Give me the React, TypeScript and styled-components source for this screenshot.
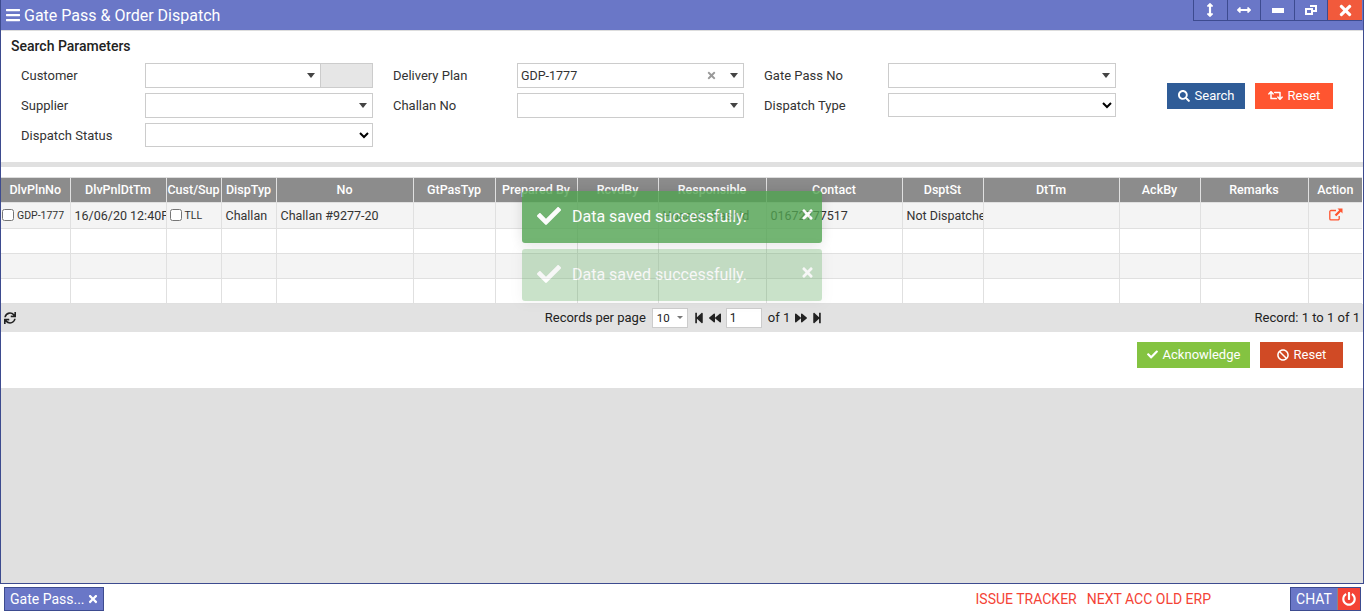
import React from 'react';
import styled, { createGlobalStyle } from 'styled-components';
import {
  FaArrowsAltH,
  FaArrowsAltV,
  FaBackward,
  FaBan,
  FaBars,
  FaCheck,
  FaForward,
  FaPowerOff,
  FaRetweet,
  FaSearch,
  FaStepBackward,
  FaStepForward,
  FaSync,
  FaTimes,
} from 'react-icons/fa';

const GlobalStyle = createGlobalStyle`
  html, body {
    margin: 0;
    padding: 0;
    background: #fff;
    overflow: hidden;
  }
  body {
    font-family: Roboto, "Liberation Sans", sans-serif;
    font-size: 13px;
    color: #333;
  }
  * {
    box-sizing: border-box;
  }
`;

const Page = styled.div`
  width: 1364px;
  height: 613px;
  display: flex;
  flex-direction: column;
`;

const Window = styled.div`
  height: 584px;
  flex: none;
  border: 1px solid #3d4b8f;
  border-top: 0;
  display: flex;
  flex-direction: column;
  background: #e0e0e0;
  position: relative;
`;

const TitleBar = styled.div`
  height: 30px;
  flex: none;
  background: #6a77c7;
  color: #fff;
  display: flex;
  justify-content: space-between;
  align-items: flex-start;
  padding-left: 4px;
`;

const Title = styled.div`
  display: flex;
  align-items: center;
  gap: 3px;
  height: 30px;
  font-size: 16px;
`;

const WindowControls = styled.div`
  display: flex;
  height: 21px;
  border-left: 1px solid #3d4b8f;
  border-bottom: 1px solid #3d4b8f;
  margin-right: 1px;
`;

const WindowControl = styled.div<{ $close?: boolean }>`
  width: 33.6px;
  display: flex;
  align-items: center;
  justify-content: center;
  border-right: 1px solid #3d4b8f;
  background: ${(p) => (p.$close ? '#f15a3c' : 'transparent')};
  font-size: ${(p) => (p.$close ? '17px' : '14px')};
  &:last-child {
    border-right: 0;
  }
`;

const MinimizeBar = styled.span`
  width: 12px;
  height: 5px;
  background: #fff;
`;

const SearchPanel = styled.div`
  height: 132px;
  flex: none;
  background: #fff;
  border-top: 1px solid #ddd;
  padding: 8px 0 0 10px;
`;

const PanelTitle = styled.div`
  font-weight: 500;
  font-size: 14px;
  line-height: 15px;
  color: #222;
`;

const FormGrid = styled.div`
  margin-top: 9px;
  padding-left: 10px;
  display: grid;
  grid-template-columns: 124px 228px 144px 227px 144px 228px auto;
  grid-template-rows: 25px 25px 24px;
  row-gap: 5px;
  align-items: center;
`;

const FieldLabel = styled.label<{ $offset?: boolean }>`
  color: #333;
  font-size: 13px;
  padding-left: ${(p) => (p.$offset ? '20px' : '0')};
`;

const FieldCell = styled.div`
  display: flex;
  height: 100%;
  min-width: 0;
`;

const Combo = styled.div`
  flex: 1;
  height: 25px;
  border: 1px solid #ccc;
  background: #fff;
  display: flex;
  align-items: center;
  padding: 0 5px 0 3px;
  font-size: 12.5px;
  color: #333;
`;

const ComboValue = styled.span`
  flex: 1;
`;

const ClearIcon = styled(FaTimes)`
  font-size: 11px;
  color: #999;
  margin-right: 13px;
`;

const Caret = styled.span`
  width: 0;
  height: 0;
  border-left: 4.5px solid transparent;
  border-right: 4.5px solid transparent;
  border-top: 5px solid #444;
`;

const ComboAddon = styled.div`
  width: 52px;
  height: 25px;
  flex: none;
  background: #e6e6e6;
  border: 1px solid #ccc;
  border-left: 0;
`;

const NativeSelect = styled.select`
  width: 100%;
  height: 24px;
  border: 1px solid #ccc;
  border-radius: 0;
  background: #fff;
  font-family: inherit;
  font-size: 12.5px;
`;

const SearchActions = styled.div`
  grid-column: 7;
  grid-row: 1 / span 3;
  align-self: start;
  display: flex;
  gap: 10px;
  margin: 20px 0 0 51px;
`;

const ActionButton = styled.button<{ $bg: string; $width: number }>`
  width: ${(p) => p.$width}px;
  height: 26px;
  border: 0;
  background: ${(p) => p.$bg};
  color: #fff;
  font-family: inherit;
  font-size: 13px;
  display: flex;
  align-items: center;
  justify-content: center;
  gap: 5px;
  padding: 0 0 1px;
`;

const Divider = styled.div`
  height: 5px;
  flex: none;
  background: #e0e0e0;
`;

const GridSection = styled.div`
  flex: none;
  background: #fff;
  padding-top: 10px;
`;

const DataTable = styled.table`
  width: 1361px;
  table-layout: fixed;
  border-collapse: collapse;
  border-top: 1px solid #ddd;
`;

const Column = styled.col<{ $width: number }>`
  width: ${(p) => p.$width}px;
`;

const HeadCell = styled.th`
  height: 25px;
  padding: 0 0 2px;
  background: #8c8c8c;
  color: #fff;
  font-size: 12.5px;
  font-weight: 500;
  text-align: center;
  border-right: 1px solid #e0e0e0;
  border-bottom: 1px solid #e0e0e0;
  overflow: hidden;
  white-space: nowrap;
  &:last-child {
    border-right: 0;
  }
`;

const Row = styled.tr<{ $alt?: boolean; $height?: number }>`
  background: ${(p) => (p.$alt ? '#f4f4f4' : '#fff')};
  height: ${(p) => p.$height ?? 25}px;
`;

const Cell = styled.td<{ $center?: boolean }>`
  padding: 0 3px 0 4px;
  font-size: 12.5px;
  color: #333;
  border-right: 1px solid #e0e0e0;
  border-bottom: 1px solid #e0e0e0;
  overflow: hidden;
  white-space: nowrap;
  text-align: ${(p) => (p.$center ? 'center' : 'left')};
  &:last-child {
    border-right: 0;
  }
`;

const CheckCell = styled(Cell)<{ $inset: number }>`
  padding: 0 0 0 ${(p) => p.$inset}px;
  font-size: 10.5px;
`;

const RowCheck = styled.input`
  width: 12px;
  height: 12px;
  margin: 0 3px 0 0;
  vertical-align: -2px;
`;

const Pager = styled.div`
  height: 28px;
  flex: none;
  background: #e2e2e2;
  display: grid;
  grid-template-columns: 1fr auto 1fr;
  align-items: center;
  padding: 0 3px 1px;
  color: #222;
  font-size: 13px;
`;

const RefreshIcon = styled(FaSync)`
  font-size: 12px;
  color: #222;
`;

const PagerCenter = styled.div`
  display: flex;
  align-items: center;
  margin-left: 4px;
`;

const PageSize = styled.div`
  width: 36px;
  height: 20px;
  margin: 0 5px 0 6px;
  padding: 0 4px;
  border: 1px solid #ccc;
  background: #fff;
  font-size: 11.5px;
  display: flex;
  align-items: center;
  justify-content: space-between;
`;

const SmallCaret = styled.span`
  width: 0;
  height: 0;
  border-left: 3px solid transparent;
  border-right: 3px solid transparent;
  border-top: 3px solid #777;
`;

const PagerIcons = styled.span`
  display: flex;
  align-items: center;
  gap: 4px;
  font-size: 12px;
  color: #222;
`;

const PageInput = styled.div`
  width: 36px;
  height: 20px;
  margin: 0 6px 0 5px;
  padding: 0 3px;
  border: 1px solid #ccc;
  background: #fff;
  font-size: 12px;
  display: flex;
  align-items: center;
`;

const PageOf = styled.span`
  margin-right: 5px;
`;

const RecordInfo = styled.div`
  text-align: right;
`;

const ActionBar = styled.div`
  height: 56px;
  flex: none;
  background: #fff;
  display: flex;
  justify-content: flex-end;
  gap: 10px;
  padding: 10px 20px 0 0;
`;

const ToastStack = styled.div`
  position: absolute;
  left: 521px;
  top: 191px;
  width: 300px;
  display: flex;
  flex-direction: column;
  gap: 6px;
`;

const Toast = styled.div<{ $fade: number }>`
  height: 52px;
  border-radius: 3px;
  background: #51a351;
  opacity: ${(p) => p.$fade};
  color: #fff;
  box-shadow: 0 0 12px rgba(0, 0, 0, 0.15);
  display: flex;
  align-items: center;
  padding: 0 8px 2px 15px;
  font-size: 16px;
`;

const ToastCheck = styled(FaCheck)`
  font-size: 24px;
  margin-right: 11px;
`;

const ToastText = styled.span`
  flex: 1;
`;

const ToastClose = styled(FaTimes)`
  font-size: 15px;
  margin: 0 -1px 4px 0;
`;

const BottomBar = styled.div`
  flex: 1;
  display: flex;
  align-items: flex-start;
  padding: 3px 3px 0 4px;
  background: #fff;
`;

const TaskTab = styled.div`
  width: 100px;
  height: 24px;
  background: #6a77c7;
  border: 1px solid #3d4b8f;
  color: #fff;
  font-size: 14px;
  display: flex;
  align-items: center;
  justify-content: space-between;
  padding: 0 4px 0 5px;
`;

const TrackerLinks = styled.div`
  margin-left: auto;
  display: flex;
  gap: 10px;
  margin-right: 79px;
  height: 24px;
  align-items: center;
  color: #f44336;
  font-size: 14px;
`;

const ChatBox = styled.div`
  display: flex;
  height: 24px;
  border: 1px solid #3d4b8f;
`;

const ChatLabel = styled.div`
  width: 46px;
  background: #6a77c7;
  color: #fff;
  font-size: 14px;
  display: flex;
  align-items: center;
  justify-content: center;
`;

const ChatPower = styled.div`
  width: 23px;
  background: #f44336;
  color: #fff;
  font-size: 14px;
  display: flex;
  align-items: center;
  justify-content: center;
  border-left: 1px solid #888;
`;

const columns: { title: string; width: number }[] = [
  { title: 'DlvPlnNo', width: 69 },
  { title: 'DlvPnlDtTm', width: 96 },
  { title: 'Cust/Sup', width: 55 },
  { title: 'DispTyp', width: 55 },
  { title: 'No', width: 137 },
  { title: 'GtPasTyp', width: 82 },
  { title: 'Prepared By', width: 82 },
  { title: 'RcvdBy', width: 81 },
  { title: 'Responsible', width: 108 },
  { title: 'Contact', width: 136 },
  { title: 'DsptSt', width: 81 },
  { title: 'DtTm', width: 136 },
  { title: 'AckBy', width: 81 },
  { title: 'Remarks', width: 108 },
  { title: 'Action', width: 54 },
];

function RestoreIcon() {
  return (
    <svg width="12" height="10" viewBox="0 0 12 10" fill="none" stroke="#fff" strokeWidth="2">
      <rect x="1" y="4" width="6" height="5" />
      <path d="M5 1H11V6H8" />
    </svg>
  );
}

function ExternalLinkIcon() {
  return (
    <svg width="14" height="13" viewBox="0 0 14 13" fill="none">
      <path d="M7 2.5H2a1.2 1.2 0 0 0-1.2 1.2v7A1.2 1.2 0 0 0 2 11.9h7a1.2 1.2 0 0 0 1.2-1.2V8" stroke="#ff5530" strokeWidth="1.3" />
      <path d="M8.5 0.5H13.5V5.5L11.8 3.8L7.3 8.3L5.7 6.7L10.2 2.2Z" fill="#ff5530" />
    </svg>
  );
}

function EmptyRow({ alt }: { alt?: boolean }) {
  return (
    <Row $alt={alt}>
      {columns.map((c) => (
        <Cell key={c.title} />
      ))}
    </Row>
  );
}

export default function App() {
  return (
    <Page>
      <GlobalStyle />
      <Window>
        <TitleBar>
          <Title>
            <FaBars size={16} />
            Gate Pass &amp; Order Dispatch
          </Title>
          <WindowControls>
            <WindowControl><FaArrowsAltV /></WindowControl>
            <WindowControl><FaArrowsAltH /></WindowControl>
            <WindowControl><MinimizeBar /></WindowControl>
            <WindowControl><RestoreIcon /></WindowControl>
            <WindowControl $close><FaTimes /></WindowControl>
          </WindowControls>
        </TitleBar>

        <SearchPanel>
          <PanelTitle>Search Parameters</PanelTitle>
          <FormGrid>
            <FieldLabel>Customer</FieldLabel>
            <FieldCell>
              <Combo><ComboValue /><Caret /></Combo>
              <ComboAddon />
            </FieldCell>
            <FieldLabel $offset>Delivery Plan</FieldLabel>
            <FieldCell>
              <Combo><ComboValue>GDP-1777</ComboValue><ClearIcon /><Caret /></Combo>
            </FieldCell>
            <FieldLabel $offset>Gate Pass No</FieldLabel>
            <FieldCell>
              <Combo><ComboValue /><Caret /></Combo>
            </FieldCell>

            <FieldLabel>Supplier</FieldLabel>
            <FieldCell>
              <Combo><ComboValue /><Caret /></Combo>
            </FieldCell>
            <FieldLabel $offset>Challan No</FieldLabel>
            <FieldCell>
              <Combo><ComboValue /><Caret /></Combo>
            </FieldCell>
            <FieldLabel $offset>Dispatch Type</FieldLabel>
            <FieldCell>
              <NativeSelect />
            </FieldCell>

            <FieldLabel>Dispatch Status</FieldLabel>
            <FieldCell>
              <NativeSelect />
            </FieldCell>

            <SearchActions>
              <ActionButton $bg="#2f5c97" $width={78}><FaSearch size={12} />Search</ActionButton>
              <ActionButton $bg="#ff5530" $width={78}><FaRetweet size={15} />Reset</ActionButton>
            </SearchActions>
          </FormGrid>
        </SearchPanel>

        <Divider />

        <GridSection>
          <DataTable>
            <colgroup>
              {columns.map((c) => (
                <Column key={c.title} $width={c.width} />
              ))}
            </colgroup>
            <thead>
              <tr>
                {columns.map((c) => (
                  <HeadCell key={c.title}>{c.title}</HeadCell>
                ))}
              </tr>
            </thead>
            <tbody>
              <Row $alt $height={26}>
                <CheckCell $inset={1}><RowCheck type="checkbox" readOnly />GDP-1777</CheckCell>
                <Cell>16/06/20 12:40PM</Cell>
                <CheckCell $inset={3}><RowCheck type="checkbox" readOnly />TLL</CheckCell>
                <Cell>Challan</Cell>
                <Cell>Challan #9277-20</Cell>
                <Cell />
                <Cell />
                <Cell />
                <Cell>Hossain Rashid</Cell>
                <Cell>01672777517</Cell>
                <Cell>Not Dispatched</Cell>
                <Cell />
                <Cell />
                <Cell />
                <Cell $center><ExternalLinkIcon /></Cell>
              </Row>
              <EmptyRow />
              <EmptyRow alt />
              <EmptyRow />
            </tbody>
          </DataTable>
        </GridSection>

        <Pager>
          <RefreshIcon />
          <PagerCenter>
            Records per page
            <PageSize>10<SmallCaret /></PageSize>
            <PagerIcons><FaStepBackward /><FaBackward /></PagerIcons>
            <PageInput>1</PageInput>
            <PageOf>of 1</PageOf>
            <PagerIcons><FaForward /><FaStepForward /></PagerIcons>
          </PagerCenter>
          <RecordInfo>Record: 1 to 1 of 1</RecordInfo>
        </Pager>

        <ActionBar>
          <ActionButton $bg="#84c341" $width={113}><FaCheck size={11} />Acknowledge</ActionButton>
          <ActionButton $bg="#d04a25" $width={83}><FaBan size={12} />Reset</ActionButton>
        </ActionBar>

        <ToastStack>
          <Toast $fade={0.8}>
            <ToastCheck /><ToastText>Data saved successfully.</ToastText><ToastClose />
          </Toast>
          <Toast $fade={0.3}>
            <ToastCheck /><ToastText>Data saved successfully.</ToastText><ToastClose />
          </Toast>
        </ToastStack>
      </Window>

      <BottomBar>
        <TaskTab>Gate Pass...<FaTimes size={12} /></TaskTab>
        <TrackerLinks>
          <span>ISSUE TRACKER</span>
          <span>NEXT ACC OLD ERP</span>
        </TrackerLinks>
        <ChatBox>
          <ChatLabel>CHAT</ChatLabel>
          <ChatPower><FaPowerOff /></ChatPower>
        </ChatBox>
      </BottomBar>
    </Page>
  );
}
